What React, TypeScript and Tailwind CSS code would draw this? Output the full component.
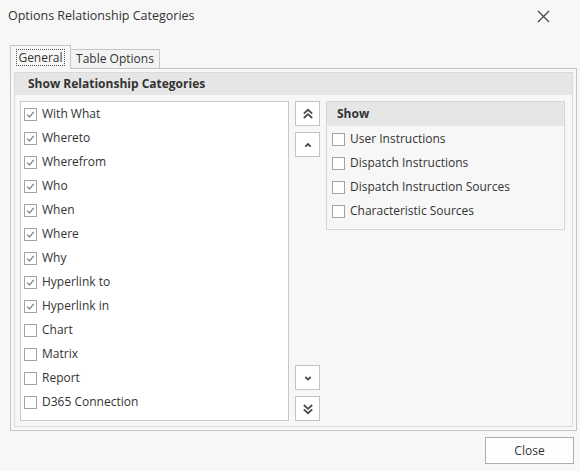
import React from 'react'

const font = { fontFamily: '"Open Sans", "Noto Sans", sans-serif' }

const categories = [
  { label: 'With What', checked: true },
  { label: 'Whereto', checked: true },
  { label: 'Wherefrom', checked: true },
  { label: 'Who', checked: true },
  { label: 'When', checked: true },
  { label: 'Where', checked: true },
  { label: 'Why', checked: true },
  { label: 'Hyperlink to', checked: true },
  { label: 'Hyperlink in', checked: true },
  { label: 'Chart', checked: false },
  { label: 'Matrix', checked: false },
  { label: 'Report', checked: false },
  { label: 'D365 Connection', checked: false },
]

const showItems = [
  'User Instructions',
  'Dispatch Instructions',
  'Dispatch Instruction Sources',
  'Characteristic Sources',
]

function Box({ checked }: { checked: boolean }) {
  return (
    <span className="flex h-[13px] w-[13px] shrink-0 items-center justify-center border border-[#a3a3a3] bg-white">
      {checked && (
        <svg width="9" height="9" viewBox="0 0 9 9">
          <path d="M1.2 4.6 L3.5 6.9 L7.8 1.8" fill="none" stroke="#6f6f6f" strokeWidth="1.1" />
        </svg>
      )}
    </span>
  )
}

function Row({ label, checked }: { label: string; checked: boolean }) {
  return (
    <div className="flex h-[24px] items-center gap-[5px]">
      <Box checked={checked} />
      <span className="text-[12px] text-[#333]">{label}</span>
    </div>
  )
}

function Chevron({ dir, double }: { dir: 'up' | 'down'; double?: boolean }) {
  const up = dir === 'up'
  return (
    <svg width="12" height="12" viewBox="0 0 12 12">
      {double ? (
        up ? (
          <>
            <path d="M1.8 5.6 L6 1.8 L10.2 5.6" fill="none" stroke="#4a4a4a" strokeWidth="1.8" />
            <path d="M1.8 10 L6 6.2 L10.2 10" fill="none" stroke="#4a4a4a" strokeWidth="1.8" />
          </>
        ) : (
          <>
            <path d="M1.8 2 L6 5.8 L10.2 2" fill="none" stroke="#4a4a4a" strokeWidth="1.8" />
            <path d="M1.8 6.4 L6 10.2 L10.2 6.4" fill="none" stroke="#4a4a4a" strokeWidth="1.8" />
          </>
        )
      ) : up ? (
        <path d="M3.3 7.6 L6 5 L8.7 7.6" fill="none" stroke="#4a4a4a" strokeWidth="1.8" />
      ) : (
        <path d="M3.3 5 L6 7.6 L8.7 5" fill="none" stroke="#4a4a4a" strokeWidth="1.8" />
      )}
    </svg>
  )
}

function MoveButton({ dir, double }: { dir: 'up' | 'down'; double?: boolean }) {
  return (
    <button className="flex h-[25px] w-[25px] items-center justify-center border border-[#c4c4c4] bg-white">
      <Chevron dir={dir} double={double} />
    </button>
  )
}

export default function App() {
  return (
    <div className="flex h-[471px] w-[580px] flex-col bg-[#f7f7f7] text-[#333]" style={font}>
      {/* title bar */}
      <div className="flex h-[32px] items-center justify-between pl-[8px] pr-[30px]">
        <span className="text-[12.5px] text-[#333]">Options Relationship Categories</span>
        <svg width="13" height="13" viewBox="0 0 13 13">
          <path d="M1 1 L12 12 M12 1 L1 12" stroke="#444" strokeWidth="1.2" />
        </svg>
      </div>

      {/* tabs */}
      <div className="ml-[10px] mt-[13px] flex items-end">
        <div className="relative z-10 -mb-px flex h-[24px] w-[61px] items-center justify-center border border-b-0 border-[#c6c6c6] bg-[#f7f7f7]">
          <span className="border border-dotted border-[#555] px-[1px] text-[12px] leading-[15px]">General</span>
        </div>
        <div className="flex h-[19px] w-[89px] items-center justify-center border border-b-0 border-l-0 border-[#c6c6c6] bg-[#f3f3f3]">
          <span className="text-[12px]">Table Options</span>
        </div>
      </div>

      {/* tab panel */}
      <div className="ml-[10px] mr-[3px] flex h-[363px] flex-col border border-[#c6c6c6] p-[3px]">
        <div className="flex flex-1 flex-col border border-[#dadada]">
          <div className="flex h-[22px] items-center bg-[#e6e6e6] pl-[13px]">
            <span className="text-[12px] font-bold text-[#333]">Show Relationship Categories</span>
          </div>
          <div className="flex flex-1 gap-[6px] pl-[5px] pr-[7px] pt-[6px] pb-[5px]">
            <div className="flex w-[269px] flex-col border border-[#c8c8c8] bg-white pl-[3px]">
              {categories.map((c) => (
                <Row key={c.label} label={c.label} checked={c.checked} />
              ))}
            </div>
            <div className="flex w-[25px] flex-col justify-between">
              <div className="flex flex-col gap-[6px]">
                <MoveButton dir="up" double />
                <MoveButton dir="up" />
              </div>
              <div className="flex flex-col gap-[6px]">
                <MoveButton dir="down" />
                <MoveButton dir="down" double />
              </div>
            </div>
            <div className="flex-1">
              <div className="flex h-[129px] flex-col border border-[#d6d6d6]">
                <div className="flex h-[24px] items-center bg-[#e6e6e6] pl-[10px]">
                  <span className="text-[12px] font-bold text-[#333]">Show</span>
                </div>
                <div className="flex flex-col pl-[5px] pt-[1px]">
                  {showItems.map((s) => (
                    <Row key={s} label={s} checked={false} />
                  ))}
                </div>
              </div>
            </div>
          </div>
        </div>
      </div>

      {/* footer */}
      <div className="flex justify-end pr-[6px] pt-[6px]">
        <button className="h-[27px] w-[89px] border border-[#adadad] bg-[#fdfdfd] text-[12px] text-[#333]">
          Close
        </button>
      </div>
    </div>
  )
}
